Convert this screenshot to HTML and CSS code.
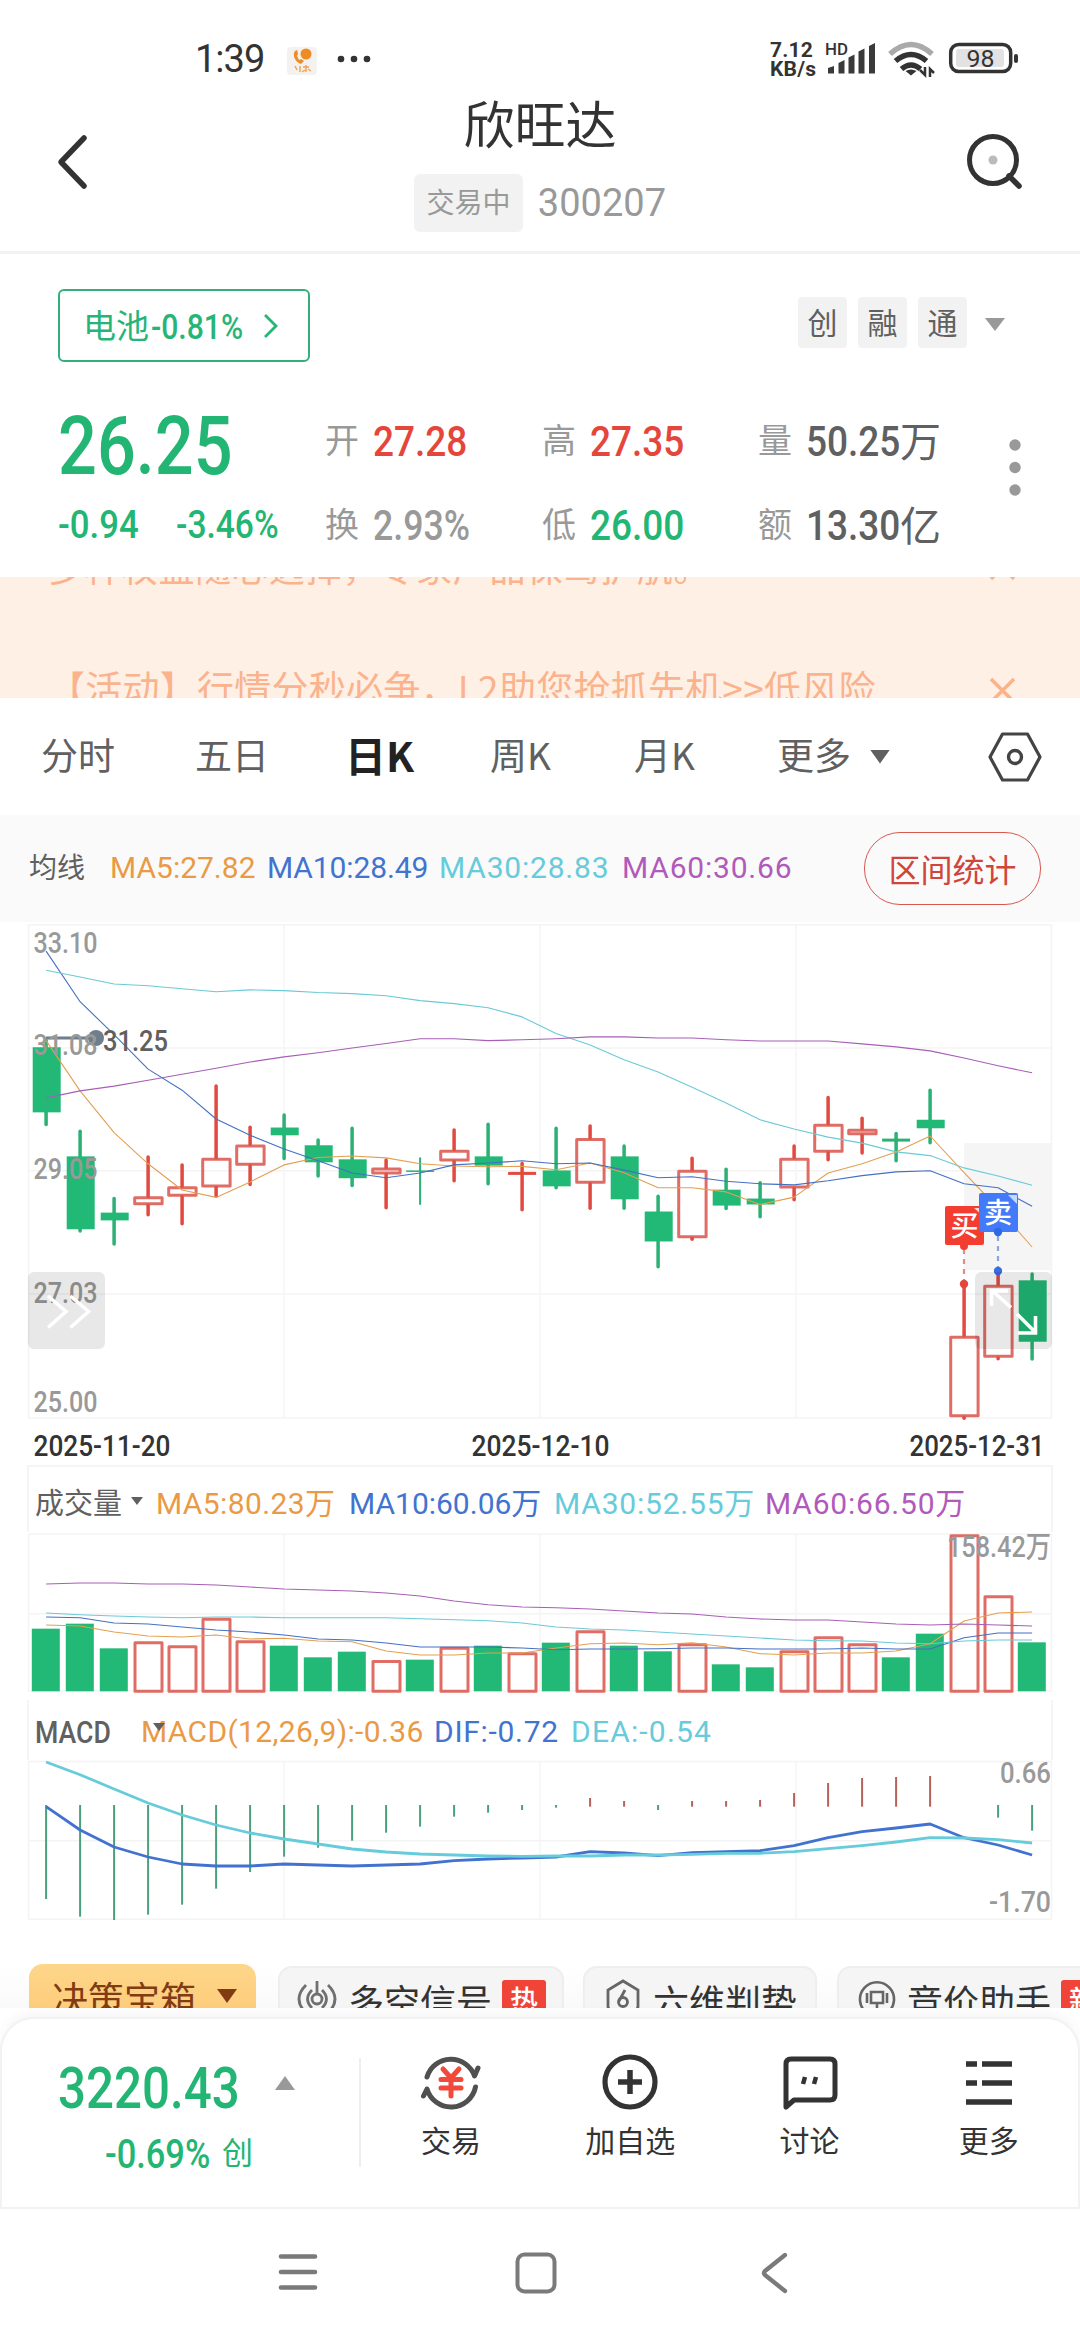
FILE: index.html
```html
<!DOCTYPE html>
<html lang="zh-CN">
<head>
<meta charset="utf-8">
<title>欣旺达 300207</title>
<link rel="stylesheet" href="styles.css">
</head>
<body>
<div class="screen">
  <div class="status">
    <span class="clock">1:39</span>
    <svg class="app-icon" width="30" height="28" viewBox="0 0 30 28"><rect width="30" height="28" rx="4" fill="#f4f2f0"/><path d="M8 4c-3 4 0 11 6 13l3-3-3-2-2 1-2-4 1-2-1-4z" fill="#f08a24"/><circle cx="19" cy="7" r="5.500" fill="#f08a24"/><path d="M8 19l2 4M13 19v6M16 20h6M19 18v7M15 25l3-2M24 24l-3-2" stroke="#f5a04c" stroke-width="1.400" fill="none"/></svg>
    <svg class="more-dots" width="34" height="8" viewBox="0 0 34 8" fill="#333"><circle cx="4" cy="4" r="3.300"/><circle cx="17" cy="4" r="3.300"/><circle cx="30" cy="4" r="3.300"/></svg>
    <span class="rate">7.12<br>KB/s</span>
    <svg class="status-icons" width="200" height="40" viewBox="820 40 200 40">
      <text x="825" y="55.500" class="hd" textLength="23" lengthAdjust="spacingAndGlyphs">HD</text>
      <path d="M828 74.500v-5.500l6-2v7.500zM838.500 74.500V64l6-3v13.500zM848.500 74.500V58.500l6-3v19zM858.500 74.500V52.500l6-3v25zM869 74.500V47l6-3v30.500z" fill="#3a3a3a"/>
      <path d="M890 55Q911 36 932 55" stroke="#aaa" stroke-width="5.500" fill="none"/>
      <path d="M895.500 62Q911 49 926.500 62M901.500 70Q911 62 920.500 70" stroke="#333" stroke-width="5.500" fill="none"/>
      <path d="M911 76.500l-5.500-4.500q5.500-3 11 0z" fill="#333"/>
      <path d="M925 68v8l-5-5M930 78v-8l4 4" stroke="#333" stroke-width="2.500" fill="none"/>
      <rect x="950.700" y="45.500" width="60" height="27" rx="8" fill="#fff" stroke="#333" stroke-width="3.500"/>
      <rect x="956" y="50" width="48" height="18" rx="3" fill="#e2e2e2"/>
      <path d="M1016 57v5" stroke="#333" stroke-width="4" stroke-linecap="round"/>
      <text x="966.500" y="67.500" class="bat" textLength="28" lengthAdjust="spacingAndGlyphs">98</text>
    </svg>
  </div>

  <header class="header">
    <svg class="back" width="40" height="60" viewBox="0 0 40 60"><path d="M34 6L11 30l23 24" fill="none" stroke="#333" stroke-width="5.500" stroke-linecap="round" stroke-linejoin="round"/></svg>
    <div class="titles">
      <h1>欣旺达</h1>
      <div class="sub"><span class="state">交易中</span><span class="code">300207</span></div>
    </div>
    <svg class="search" width="60" height="60" viewBox="0 0 60 60"><circle cx="28" cy="28" r="23.500" fill="none" stroke="#333" stroke-width="5"/><path d="M44 44l10 10" stroke="#333" stroke-width="5.500" stroke-linecap="round"/><circle cx="28" cy="28" r="4.500" fill="#bbb"/></svg>
  </header>

  <section class="quote">
    <div class="tagrow">
      <div class="industry"><span class="iname">电池</span><span class="din ipct">-0.81%</span>
        <svg width="16" height="28" viewBox="0 0 16 28"><path d="M2 3l11 11L2 25" fill="none" stroke="#27b577" stroke-width="2.800"/></svg></div>
      <div class="tags"><span>创</span><span>融</span><span>通</span><i class="tri down"></i></div>
    </div>
    <div class="figures">
      <div class="grid">
        <div class="price green"><span class="din">26.25</span></div>
        <div class="cell"><b>开</b><span class="din red">27.28</span></div>
        <div class="cell"><b>高</b><span class="din red">27.35</span></div>
        <div class="cell"><b>量</b><span class="din dark">50.25</span><em>万</em></div>
        <div class="change green"><span class="din">-0.94</span><span class="din">-3.46%</span></div>
        <div class="cell"><b>换</b><span class="din gray">2.93%</span></div>
        <div class="cell"><b>低</b><span class="din green">26.00</span></div>
        <div class="cell"><b>额</b><span class="din dark">13.30</span><em>亿</em></div>
      </div>
      <svg class="kebab" width="14" height="60" viewBox="0 0 14 60" fill="#999"><circle cx="7" cy="7" r="5.700"/><circle cx="7" cy="29.500" r="5.700"/><circle cx="7" cy="52" r="5.700"/></svg>
    </div>
  </section>

  <div class="notice">
    <div class="line first"><span>多种权益随心选择，专家产品保驾护航。</span><svg width="27" height="27" viewBox="0 0 27 27"><path d="M2 2l23 23M25 2L2 25" stroke="#fab38c" stroke-width="3.500"/></svg></div>
    <div class="line second"><span>【活动】行情分秒必争，L2助您抢抓先机&gt;&gt;低风险</span><svg width="27" height="27" viewBox="0 0 27 27"><path d="M2 2l23 23M25 2L2 25" stroke="#fab38c" stroke-width="3.500"/></svg></div>
  </div>

  <nav class="tabs">
    <span class="t1">分时</span><span class="t2">五日</span><span class="t3 on">日K</span><span class="t4">周K</span><span class="t5">月K</span><span class="t6">更多</span><i class="tri down"></i>
    <svg class="hex" width="56" height="52" viewBox="0 0 56 52"><path d="M15.500 3h25L53 26 40.500 49h-25L3 26z" fill="none" stroke="#444" stroke-width="3.200" stroke-linejoin="round"/><circle cx="28" cy="26" r="6.500" fill="none" stroke="#444" stroke-width="3.400"/></svg>
  </nav>

  <div class="mabar">
    <span class="lab">均线</span><span class="m1 orange">MA5:27.82</span><span class="m2 blue">MA10:28.49</span><span class="m3 cyan">MA30:28.83</span><span class="m4 purple">MA60:30.66</span>
    <span class="stat">区间统计</span>
  </div>

  <svg class="chart" id="price" width="1080" height="543" viewBox="0 922 1080 543"></svg>
  <div class="legend vol"><span class="lab">成交量</span><i class="tri small"></i><span class="v1 orange">MA5:80.23万</span><span class="v2 blue">MA10:60.06万</span><span class="v3 cyan">MA30:52.55万</span><span class="v4 purple">MA60:66.50万</span></div>
  <svg class="chart" id="volume" width="1080" height="168" viewBox="0 1532 1080 168"></svg>
  <div class="legend macd"><span class="din lab">MACD</span><i class="tri small"></i><span class="d1 orange">MACD(12,26,9):-0.36</span><span class="d2 blue">DIF:-0.72</span><span class="d3 cyan">DEA:-0.54</span></div>
  <svg class="chart" id="macd" width="1080" height="164" viewBox="0 1760 1080 164"></svg>

  <div class="chips">
    <div class="chip gold"><span>决策宝箱</span><i class="tri down"></i></div>
    <div class="chip c2"><svg width="40" height="44" viewBox="0 0 40 44" fill="none" stroke="#707070" stroke-width="2.800"><path d="M9 7Q-5 21 9 35M15 12Q6 21 15 30M31 7Q45 21 31 35M25 12Q34 21 25 30M20 3v13"/><circle cx="20" cy="21" r="5"/></svg><span>多空信号</span><u>热</u></div>
    <div class="chip c3"><svg width="34" height="44" viewBox="0 0 34 44" fill="none" stroke="#666" stroke-width="2.800"><path d="M9 33H4l-2-4V12L17 3l15 9v17l-2 4h-5"/><path d="M19 12l-6 11"/><circle cx="17" cy="24" r="4.500"/></svg><span>六维判势</span></div>
    <div class="chip c4"><svg width="38" height="44" viewBox="0 0 38 44" fill="none" stroke="#666" stroke-width="2.600"><path d="M9 35A17 17 0 1 1 29 35M13 14h12v11H13zM9 15v10M29 15v10M19 25v9"/></svg><span>竞价助手</span><u>新</u></div>
  </div>

  <footer class="dock">
    <div class="index green">
      <div class="irow"><span class="din big">3220.43</span><i class="tri up"></i></div>
      <div class="irow second"><span class="din">-0.69%</span><span class="cy">创</span></div>
    </div>
    <div class="sep"></div>
    <div class="act"><svg width="66" height="60" viewBox="0 0 66 60"><g fill="none" stroke="#505050" stroke-width="5" stroke-linecap="round" stroke-linejoin="round"><path d="M9 25A25 25 0 0 1 56.500 24L60 16"/><path d="M57.500 35A25 25 0 0 1 9 37L5.500 44"/></g><path d="M25 17l8 9 8-9M23 27.500h20M23 36h20M33 27v17" fill="none" stroke="#f24a3a" stroke-width="5" stroke-linecap="round"/></svg><span>交易</span></div>
    <div class="act"><svg width="60" height="60" viewBox="0 0 60 60" fill="none" stroke="#333" stroke-width="5.200"><circle cx="30" cy="30" r="25"/><path d="M30 18v24M18 30h24" stroke-width="5.500"/></svg><span>加自选</span></div>
    <div class="act"><svg width="60" height="60" viewBox="0 0 60 60" fill="none" stroke="#333" stroke-width="5"><path d="M6 55V12q0-5 5-5h39q5 0 5 5v31q0 5-5 5H14z" stroke-linejoin="round"/><path d="M25 25l-2 7M36 25l-2 7" stroke-width="4.500"/></svg><span>讨论</span></div>
    <div class="act"><svg width="60" height="60" viewBox="0 0 60 60" stroke="#333" stroke-width="5.500"><path d="M7 12h11M23 12h30M7 31h11M23 31h30M7 50h46"/></svg><span>更多</span></div>
  </footer>

  <div class="sysnav">
    <svg width="40" height="40" viewBox="0 0 40 40" stroke="#7a7a7a" stroke-width="4.600" stroke-linecap="round"><path d="M3 4.500h34M3 20h34M3 35.500h34"/></svg>
    <svg width="42" height="42" viewBox="0 0 42 42" fill="none" stroke="#7a7a7a" stroke-width="4"><rect x="2.500" y="2.500" width="37" height="37" rx="7"/></svg>
    <svg width="28" height="42" viewBox="0 0 28 42" fill="none" stroke="#7a7a7a" stroke-width="4.300" stroke-linecap="round" stroke-linejoin="round"><path d="M25 3L5 19q-2 2 0 4L25 39"/></svg>
  </div>
</div>
<script src="chart.js"></script>
</body>
</html>
```
FILE: styles.css
```css
* { box-sizing: border-box; }
body { margin: 0; background: #fff; font-family: "Noto Sans CJK SC", sans-serif; color: #333; }
.screen { width: 1080px; height: 2340px; overflow: hidden; display: flex; flex-direction: column; }
.screen > * { flex: none; }
svg { display: block; flex: none; }
h1 { margin: 0; font-weight: 400; }
b, em, u { font-weight: 400; font-style: normal; text-decoration: none; }
.din { font-family: Roboto, sans-serif; font-weight: 500; display: inline-block; transform: scaleX(.86); transform-origin: 0 50%; white-space: nowrap; }
.green { color: #22b573; }
.red { color: #e5463b; }
.gray { color: #999; }
.dark { color: #606060; }
.orange { color: #ea9a45; }
.blue { color: #4273d0; }
.cyan { color: #66cbda; }
.purple { color: #b05abb; }
.tri { display: block; flex: none; width: 20px; height: 14px; background: #999; clip-path: polygon(0 0, 100% 0, 50% 100%); }
.tri.up { clip-path: polygon(50% 0, 100% 100%, 0 100%); }
.tri.small { width: 12px; height: 8px; background: #606060; }

.status { height: 90px; display: flex; align-items: center; padding: 28px 0 0 195px; font-family: Roboto, sans-serif; }
.clock { width: 92px; font-size: 38px; letter-spacing: -1px; line-height: 62px; }
.app-icon { margin: 3px 20px 0 0; }
.more-dots { width: 34px; }
.rate { margin: 2px 0 0 399px; width: 50px; font-size: 21px; line-height: 19px; font-weight: 700; letter-spacing: .2px; white-space: nowrap; }
.hd { font: 500 17px Roboto, sans-serif; fill: #333; }
.bat { font: 400 23.5px Roboto, sans-serif; fill: #333; }

.header { height: 164px; border-bottom: 3px solid #f2f2f2; display: flex; padding: 0 55px 0 50px; }
.back { margin: 42px 324px 0 0; }
.search { margin: 42px 0 0 auto; }
.titles { width: 252px; }
.titles h1 { font-size: 51px; line-height: 72px; text-align: center; color: #333; margin-top: -4px; }
.sub { display: flex; align-items: center; margin-top: 16px; }
.state { width: 111px; height: 58px; border-radius: 6px; background: #f2f2f2; color: #999; font-size: 28px; line-height: 55px; text-align: center; }
.code { margin-left: 15px; font: 38px Roboto, sans-serif; color: #999; }

.quote { height: 323px; padding: 35px 0 0 58px; }
.tagrow { display: flex; justify-content: space-between; padding-right: 75px; }
.industry { width: 252px; height: 73px; border: 2px solid #35ad7c; border-radius: 6px; display: flex; align-items: center; padding-left: 23px; color: #27b577; }
.iname { font-size: 33px; width: 68px; line-height: 66px; margin-top: -3px; }
.ipct { font-size: 35px; width: 112px; margin-top: 4px; }
.tags { display: flex; margin-top: 8px; height: 51px; align-items: center; gap: 11px; }
.tags span { width: 49px; height: 51px; border-radius: 4px; background: #f2f2f2; color: #606060; font-size: 30px; line-height: 48px; text-align: center; }
.tags .tri { margin: 4px 0 0 7px; height: 13px; }
.figures { display: flex; }
.grid { width: 950px; display: grid; grid-template-columns: 267px 217px 216px 1fr; grid-template-rows: 85px 85px; padding-top: 36px; }
.price .din { font-size: 81px; line-height: 97px; transform: scaleX(.845); }
.cell { display: flex; align-items: center; height: 86px; }
.cell b { width: 48px; font-size: 34px; line-height: 50px; margin-top: -4px; color: #999; }
.cell .din { font-size: 43px; width: 94px; }
.cell .din.gray { transform: scaleX(.83); }
.cell em { font-size: 41px; line-height: 50px; margin-top: -4px; color: #606060; }
.cell:nth-child(n+5) { height: 84px; }
.change { display: flex; align-items: center; height: 84px; font-size: 39px; }
.change .din { width: 118px; transform: scaleX(.89); }
.change .din + .din { transform: scaleX(.86); }
.kebab { margin-top: 76px; }

.notice { height: 121px; background: #fff0e6; overflow: hidden; color: #fab38c; font-size: 37px; }
.notice .line { display: flex; justify-content: space-between; padding: 0 64px 0 48px; height: 56px; line-height: 56px; align-items: center; }
.notice .first { margin-top: -38px; font-size: 36px; }
.notice .first span { margin-top: -3px; letter-spacing: .8px; }
.notice .second { margin-top: 67px; }
.notice .second span { margin-top: -6px; letter-spacing: .25px; }

.tabs { height: 117px; display: flex; align-items: center; padding-left: 41px; font-size: 37px; color: #606060; line-height: 60px; }
.tabs span { margin-top: -5px; }
.t1 { width: 154px; } .t2 { width: 150px; } .t3 { width: 145px; } .t4 { width: 144px; } .t5 { width: 143px; } .t6 { width: 93px; }
.tabs .on { font-size: 41px; font-weight: 700; color: #222; }
.tabs .tri { background: #606060; }
.hex { margin-left: 97px; }

.mabar { height: 107px; background: #fafafa; display: flex; align-items: center; padding-left: 29px; color: #606060; }
.mabar .lab { font-size: 28px; width: 81px; margin-top: -5px; }
.orange, .blue, .cyan, .purple { font-family: Roboto, "Noto Sans CJK SC", sans-serif; font-size: 30px; white-space: nowrap; margin-top: -2px; }
.m1 { width: 157px; } .m2 { width: 172px; letter-spacing: -.1px; } .m3 { width: 183px; letter-spacing: .8px; } .m4 { width: 242px; letter-spacing: .8px; }
.stat { width: 177px; height: 73px; border: 1.5px solid #d8584d; border-radius: 36px; color: #d0453a; font-size: 32px; line-height: 70px; text-align: center; }

.legend { height: 67px; margin: 0 27px; border: solid #f5f5f5; border-width: 2px 2px 0; display: flex; align-items: center; padding-left: 6px; }
.legend .lab { font-size: 29px; color: #606060; width: 96px; margin-top: 2px; }
.legend.vol .orange, .legend.vol .blue, .legend.vol .cyan, .legend.vol .purple { margin-top: 3px; }
.legend.vol .tri { margin: 3px 13px 0 0; }
.v1 { width: 193px; letter-spacing: .4px; } .v2 { width: 205px; } .v3 { width: 211px; letter-spacing: .8px; } .v4 { letter-spacing: .8px; }
.legend.macd { height: 60px; border-top: 0; }
.macd .din.lab { width: 118px; font-size: 31px; margin-top: 4px; }
.macd .tri { margin-top: -6px; }
.legend.macd .orange, .legend.macd .blue, .legend.macd .cyan { margin-top: 2px; }
.d1 { margin-left: -24px; width: 293px; letter-spacing: .35px; } .d2 { width: 137px; letter-spacing: .7px; } .d3 { letter-spacing: 1.2px; }
.axis { font: 500 30px Roboto, "Noto Sans CJK SC", sans-serif; fill: #999; }
.axis.strong { fill: #333; }
.axis.mark { fill: #606060; }
.flag { font: 500 28px "Noto Sans CJK SC", sans-serif; fill: #fff; }

.chips { height: 84px; padding: 40px 0 0 29px; display: flex; overflow: hidden; font-size: 36px; line-height: 64px; color: #333; white-space: nowrap; background: linear-gradient(#fff 50%, #fafafa); }
.chip { flex: none; height: 70px; margin-top: 2px; border: 2px solid #eee; background: #f5f5f5; border-radius: 14px; display: flex; }
.chip svg { margin-top: 10px; }
.chip u { height: 44px; margin: 12px 0 0 10px; padding: 0 8px; background: #f04438; color: #fff; font-size: 28px; line-height: 38px; border-radius: 3px; font-weight: 500; }
.chip.gold { width: 227px; margin: 0 22px 0 0; border: 0; background: linear-gradient(#fed68a, #fcc873); color: #823c14; padding-left: 23px; line-height: 67px; }
.gold .tri { background: #823c14; margin: 25px 0 0 21px; }
.c2 { width: 286px; padding-left: 17px; margin-right: 19px; }
.c2 span { margin-left: 11px; }
.c3 { width: 234px; padding-left: 21px; margin-right: 20px; }
.c3 span { margin-left: 13px; }
.c4 { width: 300px; padding-left: 19px; }
.c4 span { margin-left: 11px; }

.dock { height: 192px; margin-top: 9px; border: 2px solid #f2f2f2; border-radius: 34px 34px 0 0; box-shadow: 0 -4px 12px rgba(0,0,0,.04); display: flex; padding-left: 56px; background: #fff; position: relative; }
.index { width: 302px; }
.irow { display: flex; height: 69px; margin-top: 34px; align-items: center; }
.irow .big { font-size: 58px; width: 217px; transform: scaleX(.85); }
.irow .up { margin-top: -9px; }
.irow.second { height: 50px; margin-top: 7px; padding-left: 47px; font-size: 40px; }
.second .din { width: 117px; }
.cy { font-size: 31px; line-height: 40px; margin-top: -7px; }
.sep { width: 2px; height: 109px; margin-top: 39px; background: #eee; }
.act { width: 180px; display: flex; flex-direction: column; align-items: center; padding: 33px 0 0 1px; font-size: 30px; line-height: 44px; }
.act span { margin-top: 5px; }

.sysnav { height: 131px; display: flex; padding: 43px 0 0 278px; }
.sysnav svg:nth-child(2) { margin-left: 197px; }
.sysnav svg:nth-child(3) { margin-left: 203px; }
```
FILE: chart.js
```js
var X0 = 46.1, STEP = 34;
var RED = '#d9534a', GREEN = '#22b876';
var reds = [3, 4, 5, 6, 10, 12, 14, 16, 19, 22, 23, 24, 27, 28];
function x(i) { return X0 + STEP * i; }
function poly(vals, y, color, w) {
  return '<polyline fill="none" stroke="' + color + '" stroke-width="' + w + '" stroke-linejoin="round" points="' +
    vals.map(function (v, i) { return x(i).toFixed(1) + ',' + y(v).toFixed(1); }).join(' ') + '"/>';
}
function line(x1, y1, x2, y2, c, w, extra) {
  return '<line x1="' + x1 + '" y1="' + y1 + '" x2="' + x2 + '" y2="' + y2 + '" stroke="' + c + '" stroke-width="' + w + '" ' + (extra || '') + '/>';
}
function box(x1, y1, w, h, attrs) {
  return '<rect x="' + x1 + '" y="' + y1 + '" width="' + w + '" height="' + h + '" ' + attrs + '/>';
}
function label(t, x1, y1, len, cls) {
  return '<text x="' + x1 + '" y="' + y1 + '" textLength="' + len + '" lengthAdjust="spacingAndGlyphs" class="axis ' + (cls || '') + '">' + t + '</text>';
}
function grid(rows, top, bottom) {
  var s = '';
  rows.forEach(function (r) { s += line(28, r, 1052, r, '#f4f4f4', 1.5); });
  [28.5, 284, 540, 796, 1051.5].forEach(function (c) { s += line(c, top, c, bottom, '#f4f4f4', 1.5); });
  return s;
}
var C = { ma5: '#e3a050', ma10: '#4470c4', ma30: '#6acad6', ma60: '#a75fb5' };

(function price() {
  var y = function (v) { return 900 + v / 2.703; };
  // high, body top, body bottom, low
  var k = [[380,398,574,607],[625,693,890,895],[807,845,866,930],[695,801,825,851],[716,774,802,875],[503,697,777,800],[614,661,718,769],[581,615,636,699],[649,663,709,746],[617,701,752,772],[703,723,742,832],[698,731,735,822],[622,675,707,759],[606,693,718,767],[712,737,741,837],[617,731,774,778],[611,643,767,833],[665,693,809,833],[801,842,923,991],[698,729,914,917],[728,783,826,834],[764,807,823,856],[665,697,780,810],[534,605,683,702],[590,618,636,684],[631,645,653,705],[514,594,617,656],[1038,1178,1398,1401],[1003,1040,1237,1240],[1011,1028,1194,1241]];
  var s = grid([924.7, 1048, 1170.8, 1294, 1418], 924, 1418);
  s += box(964, 1143, 88, 127, 'fill="#f5f5f5"');
  k.forEach(function (d, i) {
    var cx = x(i), red = reds.indexOf(i) >= 0, c = red ? '#e04a40' : '#2bb173';
    var t = y(d[1]), b = y(d[2]), w = i === 11 ? 2 : 3.5;
    s += line(cx, y(d[0]), cx, t, c, w, 'stroke-linecap="round"');
    s += line(cx, b, cx, y(d[3]), c, w, 'stroke-linecap="round"');
    if (b - t < 3) s += line(cx, t, cx, b, c, w) + line(cx - 14, (t + b) / 2, cx + 14, (t + b) / 2, c, i === 11 ? 1.5 : 3);
    else if (red) s += box(cx - 13.4, t + 1.5, 27.4, b - t - 3, 'fill="none" stroke="' + RED + '" stroke-opacity=".85" stroke-width="3" stroke-linejoin="round"');
    else s += box(cx - 13.4, t, 28, b - t, 'fill="' + GREEN + '"');
  });
  s += poly([380,516,629,713,784,804,762,716,696,692,697,713,719,721,720,729,711,737,778,778,789,823,803,738,713,681,638,737,834,938], y, C.ma5, 1.1);
  s += poly([138,275,364,457,514,592,636,673,705,738,751,738,716,711,705,713,711,730,751,748,760,767,770,759,745,735,732,767,778,828], y, C.ma10, 1.1);
  s += poly([190,208,227,232,240,248,243,245,250,253,259,272,280,291,316,361,392,432,465,506,549,594,619,641,657,681,691,724,746,771], y, C.ma30, 1.1);
  s += poly([535,516,503,487,471,455,438,424,413,400,388,375,375,380,378,375,370,370,373,373,378,381,381,381,389,397,408,427,448,467], y, C.ma60, 1.1);
  s += line(46, 1038, 92, 1038, '#6f7e8c', 3) + '<circle cx="96" cy="1038" r="8" fill="#6f7e8c"/>';
  [['33.10',953],['31.08',1055],['29.05',1179],['27.03',1303],['25.00',1411.5]].forEach(function (a) { s += label(a[0], 33.5, a[1], 64); });
  s += label('31.25', 103, 1051, 65, 'mark');
  s += label('2025-11-20', 33.5, 1455.5, 137, 'strong') + label('2025-12-10', 471.5, 1455.5, 138, 'strong') + label('2025-12-31', 909.5, 1455.5, 135, 'strong');
  // buy and sell markers
  s += line(964, 1249, 964, 1280, '#df8d88', 2.2, 'stroke-dasharray="5 5"') + '<circle cx="964" cy="1246" r="4" fill="#f23c30"/><circle cx="964" cy="1284" r="4.2" fill="#e5463b"/>';
  s += box(945, 1206, 39, 39, 'rx="2" fill="#f43d31"') + '<path d="M974 1208h9v8z" fill="#fff" opacity=".8"/><text class="flag" x="950.5" y="1236">买</text>';
  s += line(998, 1236, 998, 1268, '#8ba6dd', 2.2, 'stroke-dasharray="5 5"') + '<circle cx="998" cy="1271" r="4.2" fill="#3a6ee0"/>';
  s += box(979, 1193, 39, 39, 'rx="2" fill="#427afa"') + '<circle cx="998" cy="1232" r="4.2" fill="#2f6ae6"/><path d="M1008 1195h9v9z" fill="#fff" opacity=".7"/><text class="flag" x="984" y="1223">卖</text>';
  // scroll and fullscreen handles
  s += box(28, 1272, 77, 77, 'rx="6" fill="#000" fill-opacity=".09"') + box(975, 1272, 77, 77, 'rx="6" fill="#000" fill-opacity=".09"');
  s += '<path d="M48 1296l18 15.500-18 16M70.500 1296l18 15.500-18 16M1011 1307.500l-19-17M1008 1291h-16.500v15M1017 1314l18 18M1018 1333h17.500v-17" fill="none" stroke="#fff" stroke-width="3.600"/>';
  document.getElementById('price').innerHTML = s;
})();

(function volume() {
  var y = function (v) { return 1470 + v / 3; };
  var tops = [476,461,535,514,526,443,511,527,562,545,570,569,530,527,547,518,481,527,544,520,583,592,541,499,520,562,491,193,376,517];
  var s = grid([1534, 1613.7, 1691], 1534, 1691);
  tops.forEach(function (v, i) {
    var l = x(i) - 14.3, t = y(v);
    if (reds.indexOf(i) >= 0) s += box(l + 1.2, t + 1.5, 27, 1691.3 - t - 1.5, 'fill="none" stroke="' + RED + '" stroke-opacity=".85" stroke-width="3" stroke-linejoin="round"');
    else s += box(l, t, 28, 1691.3 - t, 'fill="' + GREEN + '"');
  });
  s += poly([465,468,486,498,501,495,507,505,513,515,543,555,555,549,549,534,521,519,524,518,531,551,555,549,549,543,521,453,429,426], y, C.ma5, 1.1);
  s += poly([441,443,459,462,471,480,486,495,507,510,519,531,531,531,534,539,537,537,536,534,534,537,537,537,534,537,537,503,489,489], y, C.ma10, 1.1);
  s += poly([429,434,438,441,443,441,441,443,443,443,443,446,449,452,459,471,477,480,486,492,498,504,510,512,513,519,521,513,510,510], y, C.ma30, 1.1);
  s += poly([342,339,339,342,342,345,351,357,360,363,369,378,393,404,411,413,417,423,429,432,441,447,450,450,456,462,465,462,465,468], y, C.ma60, 1.1);
  s += label('158.42万', 947, 1557, 104);
  document.getElementById('volume').innerHTML = s;
})();

(function macd() {
  var y = function (v) { return 1470 + v / 3; };
  var zero = 1008;
  var ends = [1287,1340,1350,1334,1304,1256,1206,1160,1133,1112,1088,1070,1040,1028,1020,1013,984,993,1020,993,993,990,969,939,924,921,918,1008,1043,1082];
  var s = grid([1761.5, 1840.7, 1919.3], 1761, 1919);
  ends.forEach(function (v, i) {
    if (v === zero) return;
    var red = v < zero;
    s += line(x(i), y(red ? 1010 : 1005), x(i), y(v), red ? '#b5625a' : '#4a9f7c', 2);
  });
  s += poly([1010,1080,1131,1161,1182,1188,1188,1182,1185,1188,1185,1182,1172,1167,1164,1161,1145,1149,1157,1148,1145,1142,1127,1103,1085,1074,1062,1103,1125,1155], y, '#4272cf', 2.8);
  s += poly([876,914,957,999,1035,1065,1089,1107,1122,1137,1146,1152,1155,1158,1159,1158,1158,1155,1155,1153,1150,1150,1145,1136,1127,1116,1103,1104,1109,1119], y, '#66cbda', 2.8);
  s += label('0.66', 1000, 1783, 51) + label('-1.70', 989, 1912, 62);
  document.getElementById('macd').innerHTML = s;
})();
```
